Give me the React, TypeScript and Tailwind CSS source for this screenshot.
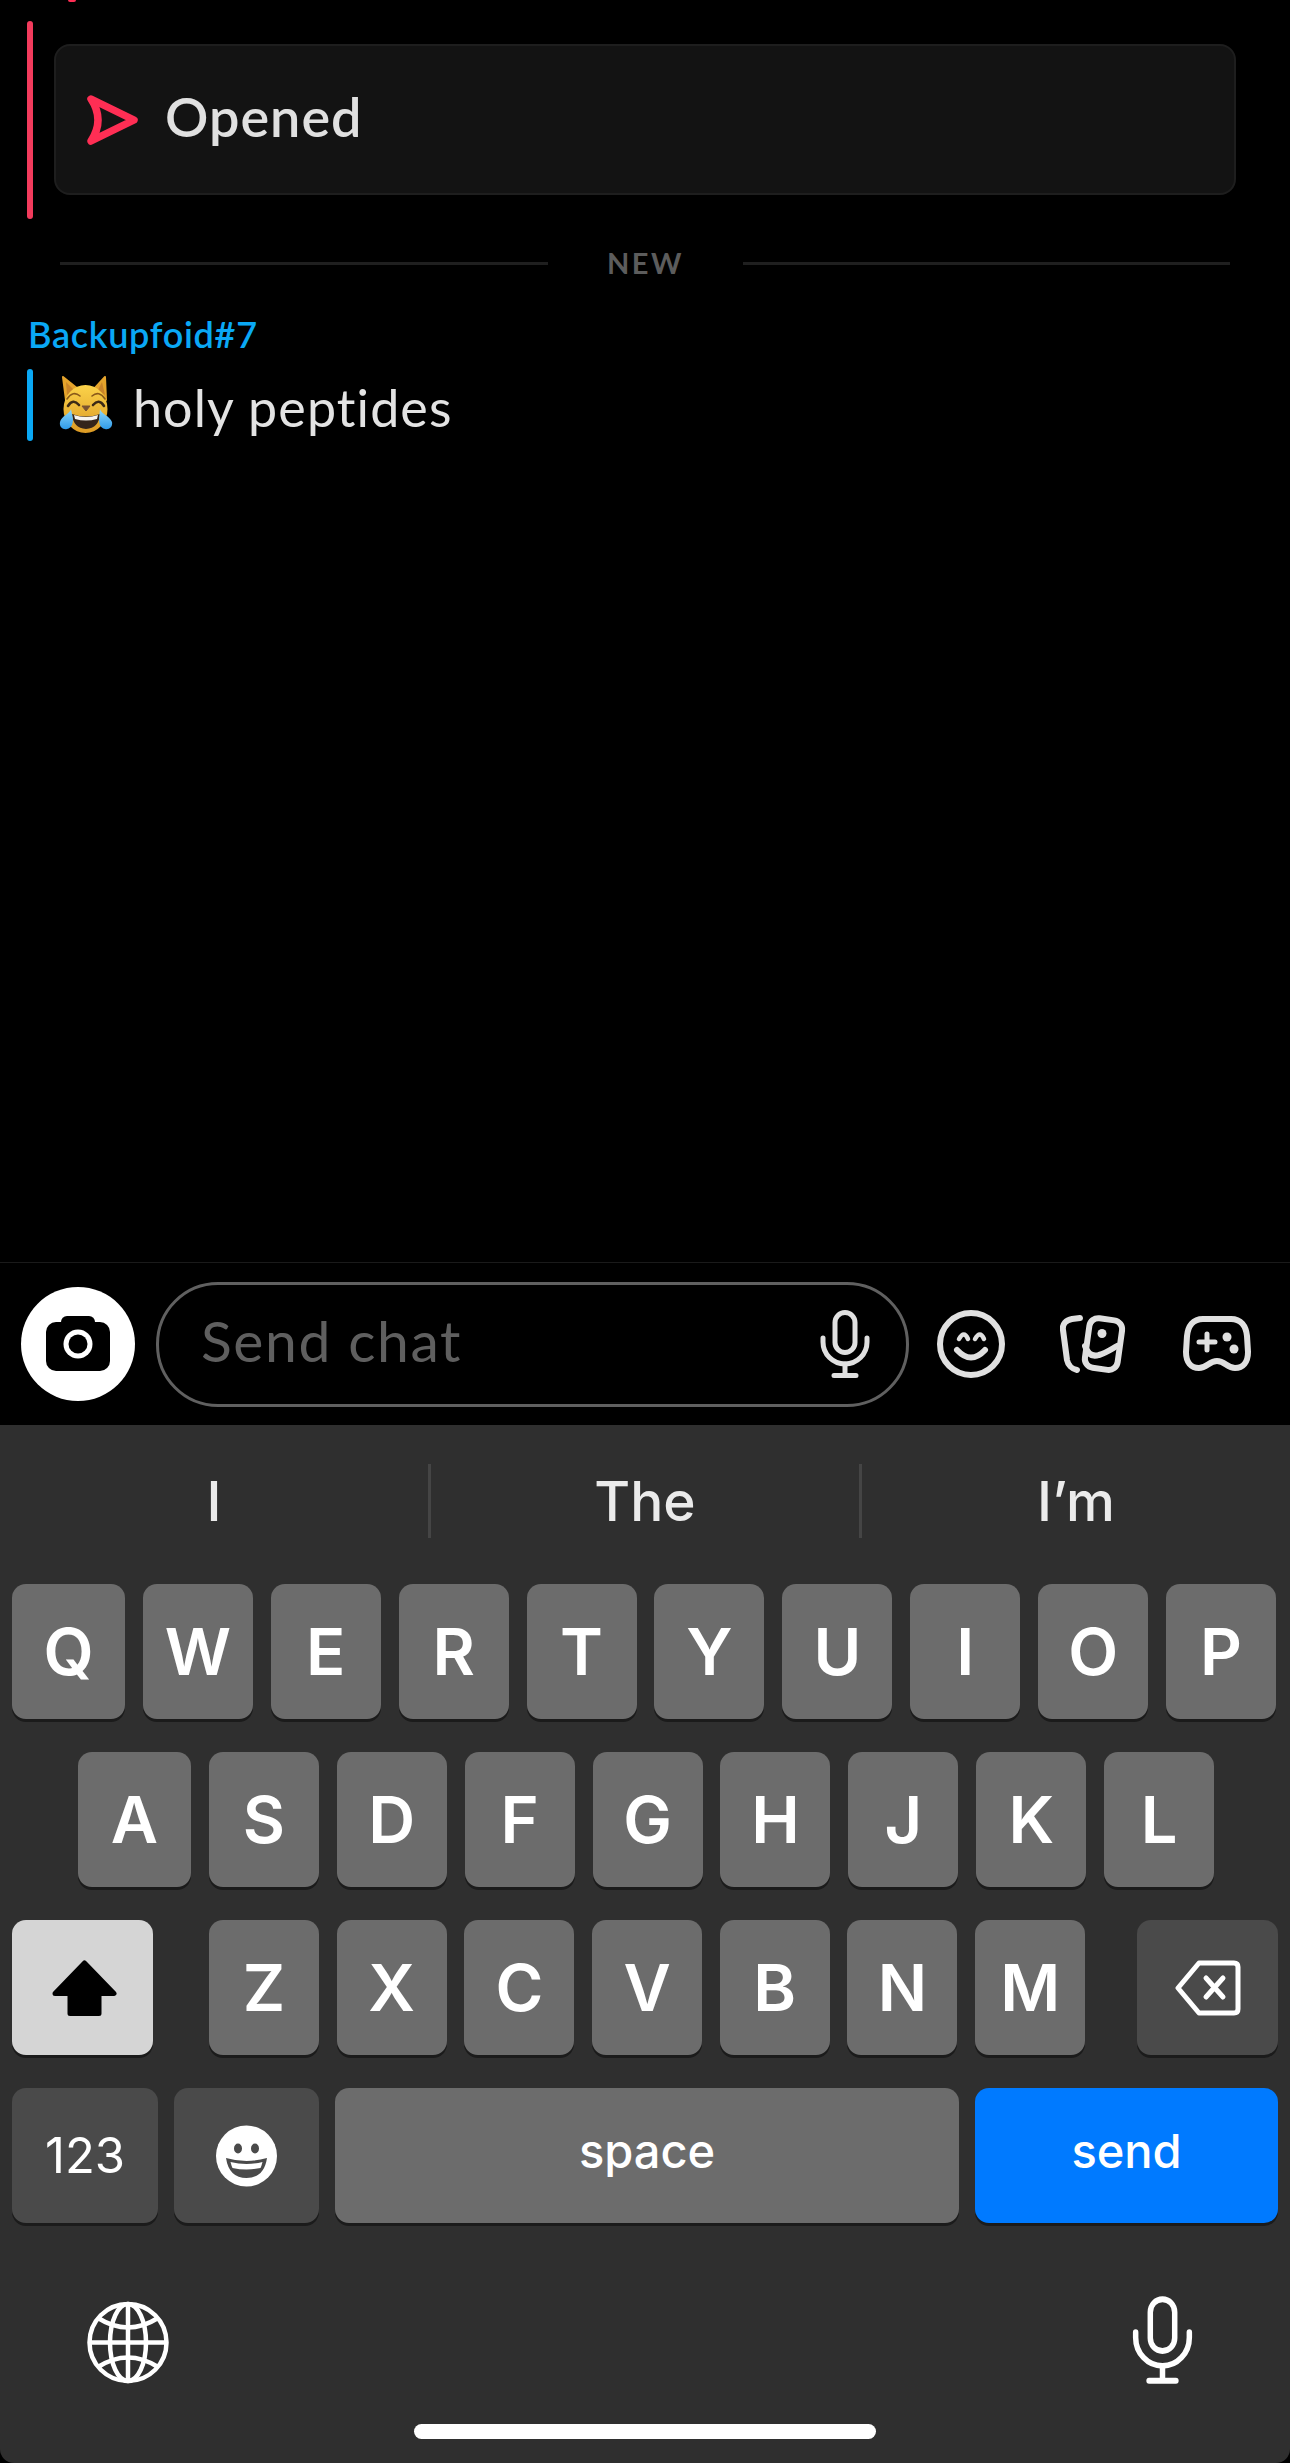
const lato = { fontFamily: '"Lato", "Open Sans", sans-serif', fontVariantLigatures: "none" };

function SendArrow() {
  return (
    <svg width="51" height="50" viewBox="0 0 51 50" fill="none" stroke="#ff2e54" strokeWidth="7.5" strokeLinejoin="round">
      <path d="M4 4 L47 25 L4 46 Q 18 25 4 4 Z" />
    </svg>
  );
}

function CatEmoji() {
  return (
    <svg width="56" height="58" viewBox="0 0 56 58">
      <defs>
        <linearGradient id="catFace" x1="0" y1="0" x2="0" y2="1">
          <stop offset="0" stopColor="#fbd34a" />
          <stop offset="1" stopColor="#dc9a24" />
        </linearGradient>
        <linearGradient id="tear" x1="0" y1="0" x2="0" y2="1">
          <stop offset="0" stopColor="#8fd8fb" />
          <stop offset="1" stopColor="#2f9be8" />
        </linearGradient>
      </defs>
      <path d="M5 1 L20 13 L8 24 Z M47 1 L36 13 L48 24 Z" fill="#e5a42c" stroke="#e5a42c" strokeLinejoin="round" strokeWidth="2" />
      <path d="M8 6 L16 14 L9 19 Z M44 6 L40 14 L47 19 Z" fill="#c9842a" />
      <ellipse cx="27.5" cy="33" rx="22" ry="24" fill="url(#catFace)" />
      <path d="M9 23 Q15 14 22 20 M34 20 Q41 14 47 23" fill="none" stroke="#8a5a1a" strokeWidth="1.6" strokeLinecap="round" />
      <path d="M10 30 Q15 22 21 29 M35 29 Q41 22 46 30" fill="none" stroke="#3c2a16" strokeWidth="2.6" strokeLinecap="round" />
      <path d="M24 30 H32 L28 35 Z" fill="#7a5230" stroke="#7a5230" strokeLinejoin="round" />
      <path d="M14 38 Q28 43 42 38 Q41 52 28 53 Q15 52 14 38 Z" fill="#33241a" />
      <path d="M16 39 Q28 43 40 39 L39 43 Q28 46 17 43 Z" fill="#f7f4ee" />
      <path d="M13 33 C12 38 3 40 2 46 C1 51 5 54 9 53 C14 52 15 47 15 43 Z" fill="url(#tear)" />
      <path d="M42 33 C43 38 52 40 54 46 C55 51 51 54 47 53 C42 52 41 47 41 43 Z" fill="url(#tear)" />
    </svg>
  );
}

function CameraGlyph() {
  return (
    <svg width="64" height="56" viewBox="0 0 64 56">
      <rect x="0" y="6" width="64" height="49" rx="10" fill="#000" />
      <rect x="15" y="0" width="34" height="16" rx="6" fill="#000" />
      <circle cx="32" cy="28" r="14.5" fill="#fff" />
      <circle cx="32" cy="28" r="9.5" fill="#000" />
    </svg>
  );
}

function Mic({ className, sw = 5 }: { className: string; sw?: number }) {
  return (
    <svg className={className} viewBox="0 0 50 68" preserveAspectRatio="none" fill="none" stroke="currentColor" strokeWidth={sw} strokeLinecap="round">
      <rect x="15" y="2.5" width="20" height="40" rx="10" />
      <path d="M3 28 V32 A22 22 0 0 0 47 32 V28" />
      <path d="M25 54 V65 M14 65.5 H36" />
    </svg>
  );
}

function Smile() {
  return (
    <svg width="68" height="68" viewBox="0 0 68 68" fill="none" stroke="#e0e0e0" strokeWidth="6" strokeLinecap="round">
      <circle cx="34" cy="34" r="31" />
      <path d="M22 29 Q27 20 31 29 M38 29 Q43 20 47 29" strokeWidth="4.5" />
      <path d="M20 40 Q34 55 48 40" />
    </svg>
  );
}

function Cards() {
  return (
    <svg width="68" height="62" viewBox="0 0 68 62" fill="none" stroke="#e0e0e0" strokeWidth="6" strokeLinecap="round" strokeLinejoin="round">
      <path d="M20 5 L12 6 C6 7 2 11 3 17 L7 47 C8 52 12 56 17 57" />
      <rect x="27" y="6" width="33" height="50" rx="9" transform="rotate(8 43 31)" />
      <circle cx="42" cy="20.5" r="4.5" fill="#e0e0e0" stroke="none" />
      <path d="M25 33 C28 42 33 44 39 42 C46 40 50 37 57 33" strokeWidth="6" />
    </svg>
  );
}

function GamePad() {
  return (
    <svg width="68" height="56" viewBox="0 0 68 56" fill="none" stroke="#e0e0e0" strokeWidth="6" strokeLinecap="round" strokeLinejoin="round">
      <path d="M20 3 H48 C58 3 63 10 64 20 L65 36 C65 46 60 52 52 52 C44 52 42 45 34 45 C26 45 24 52 16 52 C8 52 3 46 3 36 L4 20 C5 10 10 3 20 3 Z" />
      <path d="M24 18 V34 M16 26 H32" strokeWidth="5" />
      <circle cx="44" cy="21" r="4.5" fill="#e0e0e0" stroke="none" />
      <circle cx="51" cy="33" r="4.5" fill="#e0e0e0" stroke="none" />
    </svg>
  );
}

function ShiftArrow() {
  return (
    <svg width="65" height="56" viewBox="0 0 65 56" fill="#000" stroke="#000" strokeWidth="5" strokeLinejoin="round">
      <path d="M32.5 3 L62 33.5 H47 V53.5 H18 V33.5 H3 Z" />
    </svg>
  );
}

function BackspaceIcon() {
  return (
    <svg width="66" height="56" viewBox="0 0 66 56" fill="none" stroke="#fff" strokeWidth="5" strokeLinecap="round" strokeLinejoin="round">
      <path d="M24 3 H59 C61.5 3 63 4.5 63 7 V49 C63 51.5 61.5 53 59 53 H24 L3 28 Z" />
      <path d="M31 18 L48 37 M48 18 L31 37" />
    </svg>
  );
}

function EmojiKeyFace() {
  return (
    <svg width="61" height="62" viewBox="0 0 61 62">
      <circle cx="30.5" cy="31" r="30.5" fill="#fff" />
      <ellipse cx="22" cy="23.5" rx="4" ry="5" fill="#4a4a4a" />
      <ellipse cx="39" cy="23.5" rx="4" ry="5" fill="#4a4a4a" />
      <path d="M10 33 Q30.5 39 51 33 Q48 53 30.5 53 Q13 53 10 33 Z" fill="#4a4a4a" />
      <path d="M14.5 37 Q30.5 41 46.5 37 Q45.5 41 44.5 43 Q30.5 46 16.5 43 Q15.5 41 14.5 37 Z" fill="#fff" />
    </svg>
  );
}

function GlobeIcon() {
  return (
    <svg width="82" height="83" viewBox="0 0 82 83" fill="none" stroke="#fff" strokeWidth="4.5">
      <circle cx="41" cy="41.5" r="38.5" />
      <ellipse cx="41" cy="41.5" rx="18" ry="38.5" />
      <path d="M41 3 V80 M3 41.5 H79" />
      <path d="M11 17 Q41 36 71 17 M11 66 Q41 47 71 66" />
    </svg>
  );
}

const keyBase =
  "flex h-[135px] items-center justify-center rounded-[14px] shadow-[0_3px_0_#1b1b1b] text-white";
const letterKey = `${keyBase} bg-[#6c6c6c] text-[65px] font-semibold`;

function LetterRow({ letters }: { letters: string[] }) {
  return (
    <>
      {letters.map((l) => (
        <div key={l} className={`${letterKey} w-[110px]`}>
          {l}
        </div>
      ))}
    </>
  );
}

export default function App() {
  return (
    <div className="flex h-[2463px] w-[1290px] flex-col overflow-hidden bg-black font-['Inter',sans-serif]">
      {/* chat */}
      <main className="flex h-[1262px] shrink-0 flex-col" style={lato}>
        <div className="ml-[68px] h-[2px] w-[8px] rounded-b-full bg-[#ff2e54]" />
        <div className="ml-[27px] mt-[19px] flex h-[198px] items-start">
          <div className="h-full w-[6px] rounded-[3px] bg-[#f23b5c]" />
          <div className="ml-[21px] mt-[23px] flex h-[151px] w-[1182px] items-center rounded-[16px] border-2 border-[#1e1e1e] bg-[#131313] pl-[31px]">
            <SendArrow />
            <span className="ml-[27px] -translate-y-[3px] text-[54px] font-semibold tracking-[1px] text-[#e0e0e0]">Opened</span>
          </div>
        </div>

        <div className="mt-[30px] flex h-[28px] items-center pl-[60px] pr-[60px]">
          <div className="h-[3px] w-[488px] bg-[#1f1f1f]" />
          <span className="w-[195px] text-center text-[29px] font-bold tracking-[2.5px] text-[#5c5c5c]">NEW</span>
          <div className="h-[3px] w-[487px] bg-[#1f1f1f]" />
        </div>

        <div className="ml-[28px] mt-[39px] h-[36px] text-[36px] leading-[36px] font-semibold tracking-[0.7px] text-[#0aa8f5]">Backupfoid#7</div>
        <div className="ml-[27px] mt-[17px] flex h-[72px] items-center">
          <div className="h-full w-[6px] rounded-[3px] bg-[#0aa8f5]" />
          <div className="ml-[25px]">
            <CatEmoji />
          </div>
          <span className="ml-[19px] translate-y-[2px] text-[52px] tracking-[1.1px] text-[#e3e3e3]">holy peptides</span>
        </div>
      </main>

      {/* input bar */}
      <div className="flex h-[163px] shrink-0 items-center border-t border-[#1a1a1a] pl-[21px]">
        <div className="flex h-[114px] w-[114px] items-center justify-center rounded-full bg-white">
          <CameraGlyph />
        </div>
        <div
          className="ml-[21px] flex h-[125px] w-[753px] items-center justify-between rounded-[62px] border-[3px] border-[#606060] pl-[42px] pr-[36px]"
          style={lato}
        >
          <span className="-translate-y-[3px] text-[57px] tracking-[1.6px] text-[#5f5f5f]">Send chat</span>
          <Mic className="h-[68px] w-[50px] text-[#e0e0e0]" />
        </div>
        <div className="ml-[28px] flex items-center gap-[55px]">
          <Smile />
          <Cards />
          <GamePad />
        </div>
      </div>

      {/* keyboard */}
      <div className="flex flex-1 flex-col rounded-b-[14px] bg-[#2f2f2f]">
        <div className="mt-[39px] flex h-[74px] text-[55px] font-medium text-[#ebebeb]">
          <div className="flex flex-1 items-center justify-center border-r-[3px] border-[#454545]">I</div>
          <div className="flex flex-1 items-center justify-center border-r-[3px] border-[#454545]">The</div>
          <div className="flex flex-1 items-center justify-center">I’m</div>
        </div>

        <div className="mt-[46px] flex gap-[17.9px] pl-[12px]">
          <div className={`${letterKey} w-[113px]`}>Q</div>
          <LetterRow letters={["W", "E", "R", "T", "Y", "U", "I", "O", "P"]} />
        </div>

        <div className="mt-[33px] flex gap-[17.9px] pl-[78px]">
          <div className={`${letterKey} w-[113px]`}>A</div>
          <LetterRow letters={["S", "D", "F", "G", "H", "J", "K", "L"]} />
        </div>

        <div className="mt-[33px] flex pl-[12px]">
          <div className={`${keyBase} w-[141px] bg-[#d5d5d5] pl-[4px]`}>
            <ShiftArrow />
          </div>
          <div className="ml-[56px] flex gap-[17.7px]">
            <LetterRow letters={["Z", "X", "C", "V", "B", "N", "M"]} />
          </div>
          <div className={`${keyBase} ml-[52px] w-[141px] bg-[#4a4a4a]`}>
            <BackspaceIcon />
          </div>
        </div>

        <div className="mt-[33px] flex gap-[16px] pl-[12px]">
          <div className={`${keyBase} w-[146px] bg-[#4a4a4a] text-[49px]`}>123</div>
          <div className={`${keyBase} w-[145px] bg-[#4a4a4a]`}>
            <EmojiKeyFace />
          </div>
          <div className={`${keyBase} w-[624px] bg-[#6c6c6c] pb-[8px] text-[47px] font-medium`}>space</div>
          <div className={`${keyBase} w-[303px] bg-[#007aff] pb-[8px] text-[47px] font-medium`}>send</div>
        </div>

        <div className="mt-[73px] flex h-[88px] items-end justify-between pl-[87px] pr-[97px]">
          <GlobeIcon />
          <Mic className="h-[88px] w-[61px] text-white" sw={4.5} />
        </div>

        <div className="mx-auto mt-[40px] h-[15px] w-[462px] rounded-full bg-white" />
      </div>
    </div>
  );
}
